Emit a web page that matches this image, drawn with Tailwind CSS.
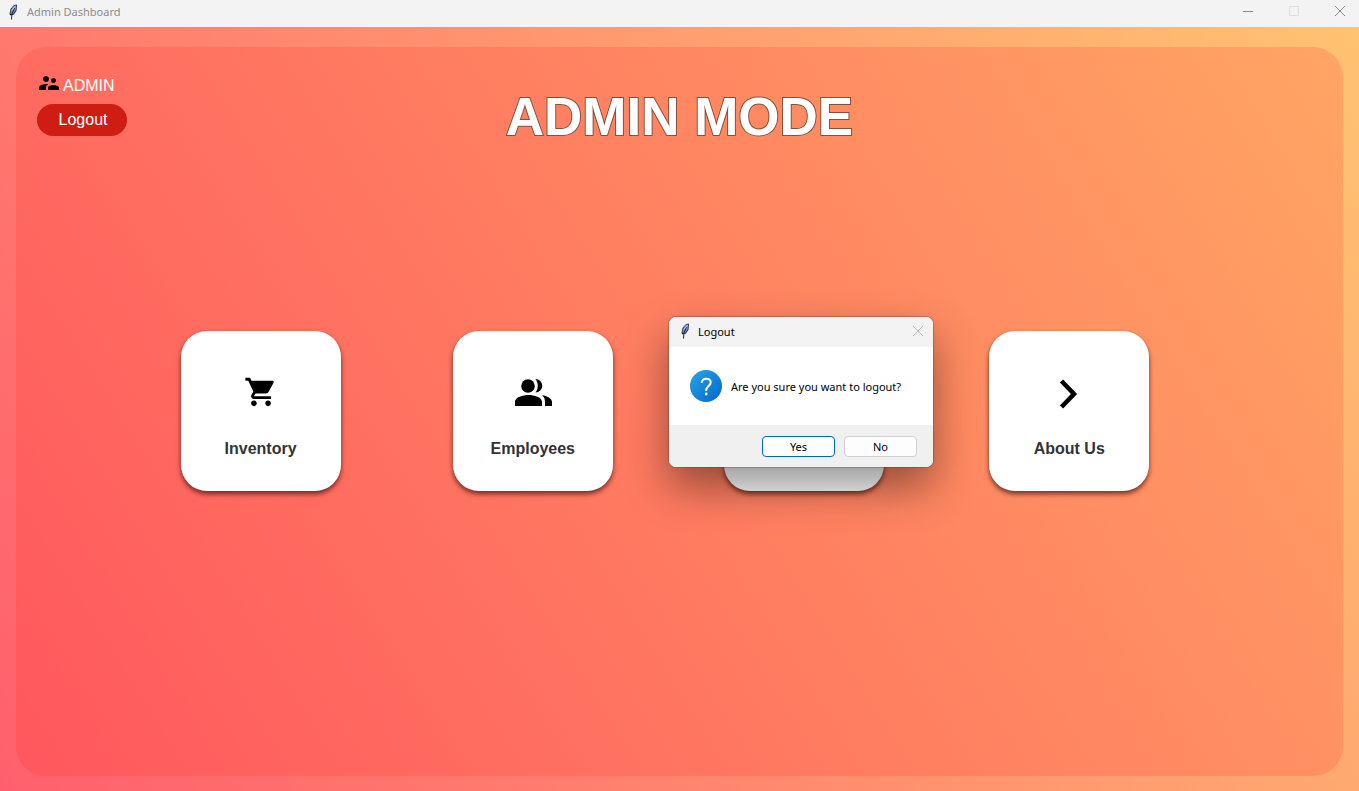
<!DOCTYPE html>
<html lang="en">
<head>
<meta charset="utf-8">
<title>Admin Dashboard</title>
<script src="https://cdn.jsdelivr.net/npm/@tailwindcss/browser@4"></script>
</head>
<body class="relative flex min-h-screen flex-col font-['Liberation_Sans',sans-serif]">
<svg class="absolute size-0"><defs>
<linearGradient id="q" x1="0" y1="0" x2="1" y2="1"><stop offset="0" stop-color="#2aa3e8"/><stop offset="1" stop-color="#0168cc"/></linearGradient>
<symbol id="feather" viewBox="0 0 16 16"><path d="M11.500.5 8.500 1.500 5.500 5 4.500 10 5.500 11.500 9 10.500 11.500 6.500 12 1Z" fill="#1c2a44"/><path d="M11.300 1.200 8 2.500 6 6 5.300 9.800 6.300 10.300 8.300 9.800 10.800 6Z" fill="#6d96cc"/><path d="M9.500 4 7 9.500 6.500 15.500" fill="none" stroke="#111" stroke-width=".9"/><path d="M10.300 2 7 6.500" stroke="#c9dcf5" stroke-width=".9"/></symbol>
</defs></svg>

<header class="flex h-[27px] items-center bg-[#f3f3f3] pl-[5px] pr-[13px]">
  <svg class="mb-1 size-4"><use href="#feather"/></svg>
  <span class="mb-1 ml-[6px] font-['Noto_Sans',sans-serif] text-[11px] leading-4 text-[#8c8c8c]">Admin Dashboard</span>
  <div class="mb-[5px] ml-auto flex items-center gap-[34px]">
    <button aria-label="Minimize"><svg class="block size-3" viewBox="0 0 12 12" stroke="#888"><path d="M1 6.500h10"/></svg></button>
    <button aria-label="Maximize" disabled><svg class="block size-3" viewBox="0 0 12 12" fill="none" stroke="#ddd"><path d="M1.500 1.500h9v9h-9z"/></svg></button>
    <button aria-label="Close"><svg class="block size-3" viewBox="0 0 12 12" stroke="#888"><path d="M1 1l10 10M11 1L1 11"/></svg></button>
  </div>
</header>

<main class="flex flex-1 flex-col bg-[linear-gradient(58deg,#ff5f6d,#ffc371)] px-4 pt-5 pb-[15px]">
  <section class="relative flex flex-1 flex-col rounded-[30px] bg-[linear-gradient(58deg,#ff575e,#ffa564)]">
    <div class="absolute top-[26px] left-[21px]">
      <div class="flex h-6 items-center text-base text-white">
        <svg class="mb-1 size-6 text-black" viewBox="0 0 24 24" fill="currentColor"><path d="M16.500 12c1.380 0 2.490-1.120 2.490-2.500S17.880 7 16.500 7 14 8.120 14 9.500s1.120 2.500 2.500 2.500zM9 11c1.660 0 2.990-1.340 2.990-3S10.660 5 9 5 6 6.340 6 8s1.340 3 3 3zm7.500 3c-1.830 0-5.500.92-5.500 2.750V19h11v-2.250c0-1.830-3.670-2.750-5.500-2.750zM9 13c-2.330 0-7 1.170-7 3.500V19h7v-2.250c0-.85.33-2.340 2.370-3.470C10.500 13.100 9.660 13 9 13z"/></svg>
        <span class="mt-[2px] ml-[2px]">ADMIN</span>
      </div>
      <button class="mt-[7px] h-8 w-[90px] rounded-full bg-[#cf1d13] pl-[2px] text-base text-white">Logout</button>
    </div>
    <h1 class="mt-[36px] text-center text-[53px] leading-[68px] font-bold text-white [-webkit-text-stroke:2px_#84503f] [paint-order:stroke_fill]">ADMIN MODE</h1>
    <nav class="mt-[180px] grid grid-cols-[272fr_271fr_265fr_160px] pr-[14.6%] pl-[12.4%]">
      <button class="flex size-40 flex-col items-center rounded-[26px] bg-white pt-[44px] shadow-[0_3px_5px_rgba(60,10,10,0.7)]">
        <svg class="size-[34px]" viewBox="0 0 24 24"><path d="M7 18c-1.100 0-1.990.9-1.990 2S5.900 22 7 22s2-.9 2-2-.9-2-2-2zM1 2v2h2l3.600 7.590-1.350 2.450c-.16.28-.25.61-.25.960 0 1.100.9 2 2 2h12v-2H7.420c-.14 0-.25-.11-.25-.25l.03-.12.900-1.630h7.450c.75 0 1.410-.41 1.750-1.030l3.580-6.490c.08-.14.12-.31.12-.48 0-.55-.45-1-1-1H5.210l-.94-2H1zm16 16c-1.100 0-1.990.9-1.990 2s.890 2 1.990 2 2-.9 2-2-.9-2-2-2z"/></svg>
        <span class="mt-[28px] text-base font-bold text-[#333]">Inventory</span>
      </button>
      <button class="flex size-40 flex-col items-center rounded-[26px] bg-white pt-[42px] shadow-[0_3px_5px_rgba(60,10,10,0.7)]">
        <svg class="h-9 w-10" viewBox="0 0 40 36"><circle cx="15" cy="13" r="6.800"/><path d="M2 33v-4c0-5 8-7 13.500-7s13.500 2 13.500 7v4zM22.500 6a6.800 6.800 0 1 1 0 13.600c3-4 3-9.600 0-13.600zM29 22.300c5 .7 10 3 10 6.700v4h-7v-4c0-3-1-5-3-6.700z"/></svg>
        <span class="mt-[28px] text-base font-bold text-[#333]">Employees</span>
      </button>
      <button aria-label="Sales" class="size-40 rounded-[26px] bg-white shadow-[0_3px_5px_rgba(60,10,10,0.7)]"></button>
      <button class="flex size-40 flex-col items-center rounded-[26px] bg-white pt-[42px] shadow-[0_3px_5px_rgba(60,10,10,0.7)]">
        <svg class="h-9 w-10" viewBox="0 0 40 36" fill="none" stroke="#000" stroke-width="4.500"><path d="M12.500 8l12.500 13-12.500 13"/></svg>
        <span class="mt-[28px] text-base font-bold text-[#333]">About Us</span>
      </button>
    </nav>
  </section>
</main>

<div role="dialog" aria-labelledby="dt" class="absolute top-[317px] left-[669px] w-[264px] overflow-hidden rounded-[7px] bg-white font-['Noto_Sans',sans-serif] text-black shadow-[0_0_1px_1px_rgba(90,60,50,0.35),0_20px_44px_rgba(0,0,0,0.42)]">
  <div class="flex h-[30px] items-center bg-[#f3f3f3] pr-[9px] pl-2">
    <svg class="mb-[2px] size-4"><use href="#feather"/></svg>
    <h2 id="dt" class="ml-[5px] text-[11px]">Logout</h2>
    <button aria-label="Close dialog" class="mb-[2px] ml-auto"><svg class="block size-3" viewBox="0 0 12 12" stroke="#bbb"><path d="M1 1l10 10M11 1L1 11"/></svg></button>
  </div>
  <div class="flex h-[78px] items-center pl-[21px]">
    <svg class="size-8" viewBox="0 0 32 32"><circle cx="16" cy="16" r="16" fill="url(#q)"/><path d="M11.800 13V12.500C12 10 13.800 8.700 16.300 8.700C18.900 8.700 20.700 10.100 20.700 12.500C20.700 16 16.200 16.200 16.200 20.200V21" fill="none" stroke="#fff" stroke-width="2"/><circle cx="16.200" cy="24" r="1.400" fill="#fff"/></svg>
    <p class="mt-[2px] ml-[9px] text-[11px] whitespace-nowrap">Are you sure you want to logout?</p>
  </div>
  <div class="flex h-[42px] items-center justify-end gap-[9px] bg-[#f0f0f0] pr-4 text-[11px]">
    <button class="h-[21px] w-[73px] rounded border border-[#0067c0] bg-[#fdfdfd] pt-[2px]">Yes</button>
    <button class="h-[21px] w-[73px] rounded border border-[#d0d0d0] bg-[#fdfdfd] pt-[2px]">No</button>
  </div>
</div>
</body>
</html>
